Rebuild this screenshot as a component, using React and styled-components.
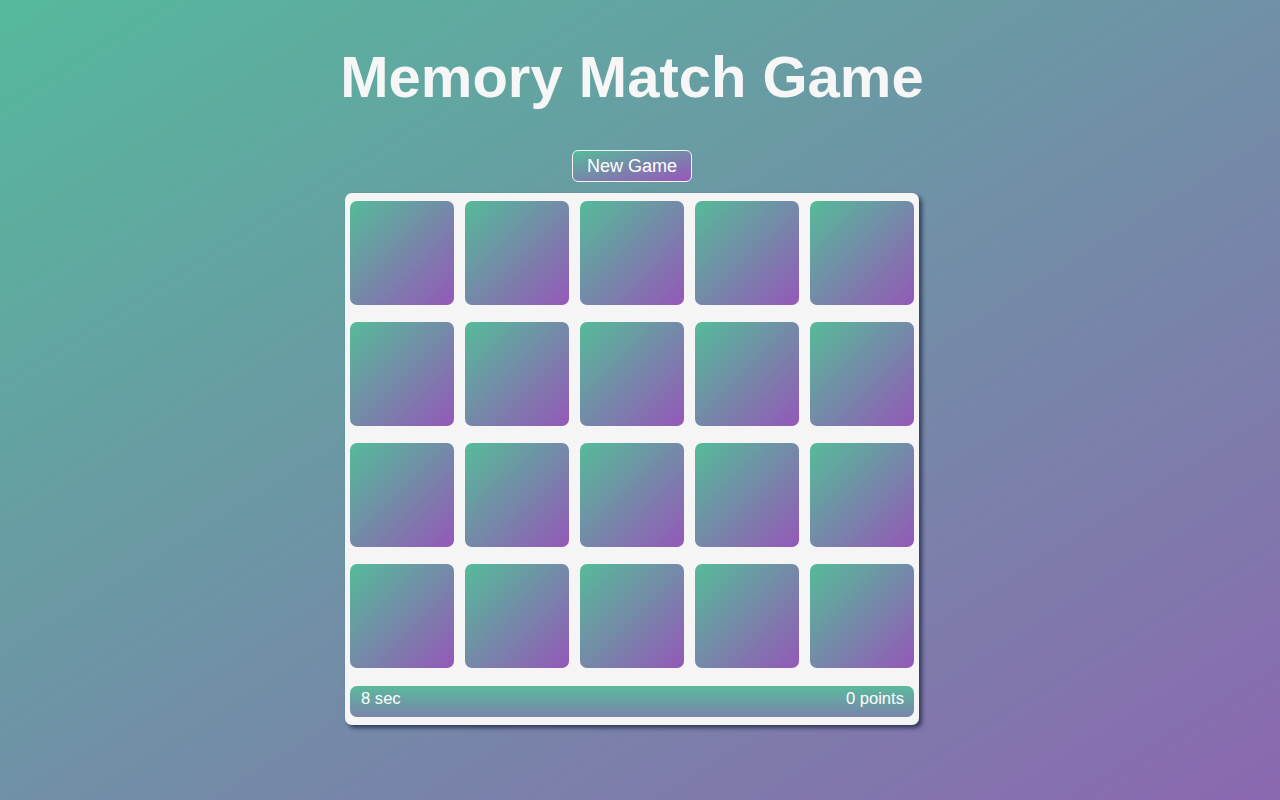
import React from "react";
import styled, { createGlobalStyle } from "styled-components";

const Global = createGlobalStyle`
  html, body { margin: 0; padding: 0; }
  body {
    min-height: 800px;
    font-family: "Liberation Sans", Arial, sans-serif;
    background: linear-gradient(to bottom right, #55b99c, #8b68b0);
    background-attachment: fixed;
  }
`;

const Page = styled.div`
  width: 1264px;
  min-height: 800px;
  display: flex;
  flex-direction: column;
  align-items: center;
`;

const Title = styled.h1`
  margin: 44px 0 0;
  font-size: 58px;
  line-height: 66px;
  font-weight: bold;
  color: #f6f6f6;
`;

const NewGameButton = styled.button`
  margin-top: 40px;
  height: 32px;
  padding: 0 14px;
  border: 1px solid #f4f4f4;
  border-radius: 6px;
  background: linear-gradient(to bottom right, #55bb99, #9955bb);
  color: #ffffff;
  font-family: "Liberation Sans", Arial, sans-serif;
  font-size: 18px;
  cursor: pointer;
`;

const Board = styled.div`
  margin-top: 11px;
  width: 564px;
  padding: 8px 5px 8px 5px;
  background: #f5f5f5;
  border-radius: 7px;
  box-shadow: 3px 3px 4px rgba(20, 30, 60, 0.7);
`;

const Grid = styled.div`
  display: grid;
  grid-template-columns: repeat(5, 104px);
  grid-auto-rows: 104px;
  column-gap: 11px;
  row-gap: 17px;
`;

const Card = styled.div`
  border-radius: 7px;
  background: linear-gradient(to bottom right, #55bb99, #9458b8);
`;

const Footer = styled.div`
  margin-top: 18px;
  height: 31px;
  box-sizing: border-box;
  border-radius: 7px;
  background: linear-gradient(to bottom, #5aba9c, #7b84ac);
  display: flex;
  justify-content: space-between;
  align-items: flex-start;
  padding: 3px 10px 0 11px;
  color: #ffffff;
  font-size: 16.6px;
  line-height: 19px;
`;

export default function App() {
  const cards = Array.from({ length: 20 }, (_, i) => i);
  return (
    <>
      <Global />
      <Page>
        <Title>Memory Match Game</Title>
        <NewGameButton>New Game</NewGameButton>
        <Board>
          <Grid>
            {cards.map((i) => (
              <Card key={i} />
            ))}
          </Grid>
          <Footer>
            <span>8 sec</span>
            <span>0 points</span>
          </Footer>
        </Board>
      </Page>
    </>
  );
}
